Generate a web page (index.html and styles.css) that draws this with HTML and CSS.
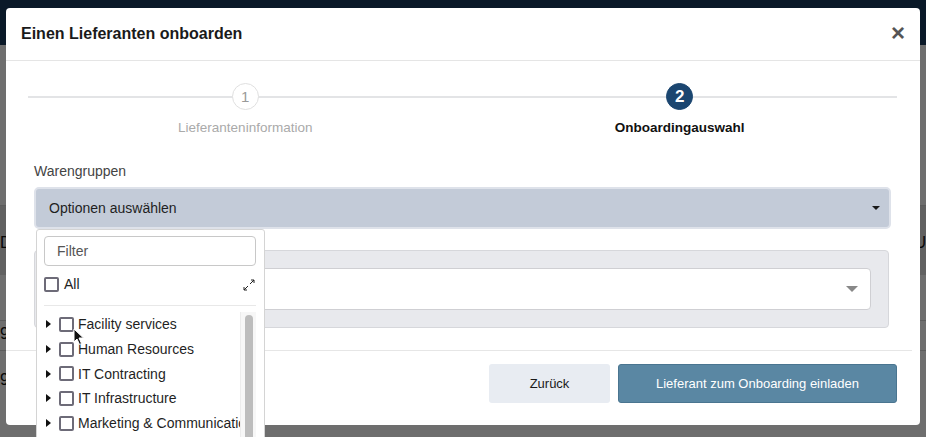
FILE: index.html
```html
<!DOCTYPE html>
<html lang="de">

<head>
    <meta charset="UTF-8">
    <meta name="viewport" content="width=device-width, initial-scale=1.0">
    <title>Einen Lieferanten onboarden</title>
    <link rel="stylesheet" href="styles.css">
</head>

<body>
    <!-- Page behind the modal -->
    <div class="page">
        <div class="page-topbar"></div>
        <div class="page-content">
            <div class="page-row row-a"><span class="frag-left">D</span><span class="frag-right">U</span></div>
            <div class="page-row row-b"><span class="frag-left">9</span></div>
            <div class="page-row row-c"><span class="frag-left">9</span></div>
        </div>
        <div class="backdrop"></div>
    </div>

    <!-- Modal -->
    <div class="modal">
        <div class="modal-header">
            <h1 class="modal-title">Einen Lieferanten onboarden</h1>
            <span class="modal-close">&times;</span>
        </div>

        <div class="modal-body">
            <!-- Stepper -->
            <div class="stepper">
                <div class="step">
                    <div class="step-circle">1</div>
                    <div class="step-label">Lieferanteninformation</div>
                </div>
                <div class="step step-active">
                    <div class="step-circle">2</div>
                    <div class="step-label">Onboardingauswahl</div>
                </div>
            </div>

            <!-- Warengruppen -->
            <div class="field">
                <label class="field-label">Warengruppen</label>
                <div class="select-wrap">
                    <div class="select select-open">
                        <span>Optionen auswählen</span>
                        <span class="caret"></span>
                    </div>

                    <!-- Dropdown -->
                    <div class="dropdown">
                        <input class="dropdown-filter" type="text" placeholder="Filter">
                        <div class="dropdown-all">
                            <span class="checkbox"></span>
                            <span>All</span>
                            <svg class="expand-icon" width="12" height="12" viewBox="0 0 12 12">
                                <path d="M7 5 L11 1 M8 1 H11 V4" stroke="#222" stroke-width="1" fill="none" />
                                <path d="M5 7 L1 11 M1 8 V11 H4" stroke="#222" stroke-width="1" fill="none" />
                            </svg>
                        </div>
                        <div class="dropdown-list">
                            <div class="dropdown-items">
                                <div class="tree-item"><span class="tree-toggle"></span><span class="checkbox"></span><span>Facility services</span></div>
                                <div class="tree-item"><span class="tree-toggle"></span><span class="checkbox"></span><span>Human Resources</span></div>
                                <div class="tree-item"><span class="tree-toggle"></span><span class="checkbox"></span><span>IT Contracting</span></div>
                                <div class="tree-item"><span class="tree-toggle"></span><span class="checkbox"></span><span>IT Infrastructure</span></div>
                                <div class="tree-item"><span class="tree-toggle"></span><span class="checkbox"></span><span>Marketing &amp; Communications</span></div>
                            </div>
                            <div class="scrollbar"><div class="scrollbar-thumb"></div></div>
                        </div>
                    </div>
                </div>
            </div>

            <!-- Second group -->
            <div class="panel">
                <div class="select select-white">
                    <span></span>
                    <span class="caret caret-grey"></span>
                </div>
            </div>
        </div>

        <div class="modal-footer">
            <button class="btn btn-secondary">Zurück</button>
            <button class="btn btn-primary">Lieferant zum Onboarding einladen</button>
        </div>
    </div>

    <!-- Mouse pointer -->
    <svg class="cursor" width="12" height="18" viewBox="0 0 12 18">
        <path d="M1 1 L1 14 L4 11 L6.5 16.5 L8.5 15.5 L6 10 L10.5 10 Z" fill="#111" stroke="#fff" stroke-width="1" />
    </svg>
</body>

</html>
```

FILE: styles.css
```css
/* Base */
* {
    box-sizing: border-box;
}

body {
    margin: 0;
    width: 926px;
    height: 437px;
    overflow: hidden;
    font-family: "Liberation Sans", Arial, sans-serif;
    color: #222;
}

/* Page behind the modal */
.page {
    position: relative;
    width: 926px;
    height: 437px;
    background-color: #f4f4f4;
}

.page-topbar {
    height: 45px;
    background-color: #17385a;
}

.page-content {
    padding-top: 150px;
}

.page-row {
    position: relative;
    height: 30px;
    border-top: 1px solid #ccc;
    font-size: 16px;
    color: #111;
}

.row-a {
    height: 70px;
    background-color: #d8d8d8;
    margin-top: 10px;
    padding-top: 28px;
}

.row-b {
    margin-top: 45px;
    padding-top: 4px;
}

.row-c {
    padding-top: 20px;
    height: 50px;
}

.frag-right {
    position: absolute;
    right: 0;
    top: 28px;
}

.backdrop {
    position: absolute;
    inset: 0;
    background-color: rgba(0, 0, 0, 0.55);
}

/* Modal */
.modal {
    position: absolute;
    left: 6px;
    top: 8px;
    width: 914px;
    height: 417px;
    background-color: #ffffff;
    border-radius: 4px;
    display: flex;
    flex-direction: column;
}

.modal-header {
    height: 53px;
    padding: 0 15px;
    display: flex;
    align-items: center;
    justify-content: space-between;
    border-bottom: 1px solid #e5e5e5;
}

.modal-title {
    margin: 0;
    font-size: 16px;
    font-weight: bold;
    color: #1a1a1a;
}

.modal-close {
    font-size: 24px;
    font-weight: bold;
    color: #555;
    line-height: 1;
    margin-top: -2px;
}

.modal-body {
    flex: 1;
    padding: 22px 23px 0 22px;
}

/* Stepper */
.stepper {
    position: relative;
    display: flex;
}

.stepper::before {
    content: "";
    position: absolute;
    left: 0;
    right: 0;
    top: 13px;
    height: 2px;
    background-color: #e3e4e6;
}

.step {
    position: relative;
    flex: 1;
    display: flex;
    flex-direction: column;
    align-items: center;
}

.step-circle {
    width: 27px;
    height: 27px;
    border-radius: 50%;
    background-color: #ffffff;
    border: 1px solid #e0e0e0;
    color: #9a9a9a;
    font-size: 15px;
    display: flex;
    align-items: center;
    justify-content: center;
}

.step-label {
    margin-top: 10px;
    font-size: 13.5px;
    color: #aaaaaa;
}

.step-active .step-circle {
    background-color: #1b4670;
    border-color: #1b4670;
    color: #ffffff;
    font-weight: bold;
    font-size: 17px;
}

.step-active .step-label {
    color: #111;
    font-weight: bold;
}

/* Field */
.field {
    margin-top: 28px;
    padding-left: 6px;
    padding-right: 6px;
}

.field-label {
    display: block;
    font-size: 14px;
    color: #444;
    margin-bottom: 8px;
}

.select-wrap {
    position: relative;
}

.select {
    height: 42px;
    border-radius: 5px;
    padding: 0 9px 0 13px;
    display: flex;
    align-items: center;
    justify-content: space-between;
    font-size: 14px;
}

.select-open {
    background-color: #c3cbd8;
    border: 2px solid #dee2ea;
    color: #1f1f1f;
}

.caret {
    width: 0;
    height: 0;
    border-left: 4px solid transparent;
    border-right: 4px solid transparent;
    border-top: 4px solid #1a1a1a;
}

.caret-grey {
    border-left-width: 6px;
    border-right-width: 6px;
    border-top: 6px solid #888;
}

/* Second group */
.panel {
    margin: 21px 8px 0 6px;
    height: 78px;
    background-color: #e8e9ed;
    border: 1px solid #d6d7db;
    border-radius: 4px;
    padding: 17px 17px 0 17px;
}

.select-white {
    background-color: #ffffff;
    border: 1px solid #cfcfd3;
    border-radius: 4px;
    padding-right: 12px;
}

/* Dropdown */
.dropdown {
    position: absolute;
    left: 2px;
    top: 42px;
    width: 229px;
    height: 220px;
    background-color: #ffffff;
    border: 1px solid #d4d4d4;
    border-radius: 3px;
    padding: 6px 8px 0 7px;
    z-index: 10;
}

.dropdown-filter {
    display: block;
    width: 100%;
    height: 30px;
    border: 1px solid #c8c8c8;
    border-radius: 4px;
    padding: 0 12px;
    font-family: inherit;
    font-size: 14px;
    color: #333;
}

.dropdown-filter::placeholder {
    color: #555;
}

.dropdown-all {
    position: relative;
    display: flex;
    align-items: center;
    gap: 5px;
    height: 40px;
    font-size: 14px;
    border-bottom: 1px solid #e8e8e8;
    padding-bottom: 3px;
}

.expand-icon {
    position: absolute;
    right: 1px;
    top: 13px;
}

.checkbox {
    width: 15px;
    height: 15px;
    border: 2px solid #6d6b78;
    border-radius: 2px;
    background-color: #ffffff;
    flex-shrink: 0;
}

.dropdown-list {
    display: flex;
    padding-top: 6px;
}

.dropdown-items {
    flex: 1;
    overflow: hidden;
}

.tree-item {
    display: flex;
    align-items: center;
    height: 24.7px;
    font-size: 14px;
    white-space: nowrap;
    color: #1f1f1f;
}

.tree-toggle {
    width: 0;
    height: 0;
    margin-left: 2px;
    margin-right: 8px;
    border-top: 4px solid transparent;
    border-bottom: 4px solid transparent;
    border-left: 5px solid #111;
    flex-shrink: 0;
}

.tree-item .checkbox {
    margin-right: 4px;
}

.scrollbar {
    width: 16px;
    flex-shrink: 0;
    background-color: #f7f7f7;
    border-left: 1px solid #ececec;
    padding: 3px 3px 0 4px;
    height: 130px;
}

.scrollbar-thumb {
    height: 130px;
    background-color: #bdbdbd;
    border-radius: 4px;
}

/* Footer */
.modal-footer {
    height: 75px;
    margin-right: 8px;
    border-top: 1px solid #e6e6e6;
    display: flex;
    justify-content: flex-end;
    align-items: flex-start;
    gap: 8px;
    padding: 13px 15px 0 0;
}

.btn {
    height: 39px;
    border-radius: 3px;
    font-family: inherit;
    font-size: 13px;
    border: 1px solid transparent;
}

.btn-secondary {
    width: 121px;
    background-color: #e8ecf2;
    color: #1a1a1a;
}

.btn-primary {
    width: 279px;
    background-color: #5a87a3;
    border-color: #4a7590;
    color: #ffffff;
}

/* Mouse pointer */
.cursor {
    position: absolute;
    left: 73px;
    top: 328px;
    z-index: 20;
}
```
